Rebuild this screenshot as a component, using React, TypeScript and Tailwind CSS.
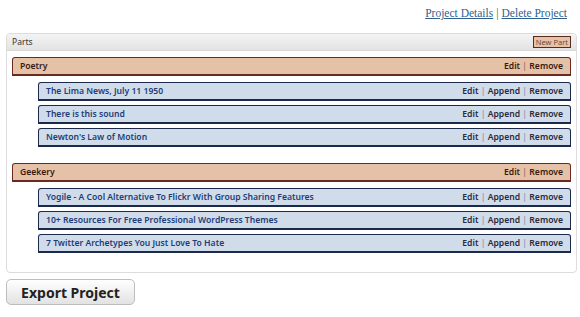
import React from 'react';

const groups = [
  {
    name: 'Poetry',
    items: ['The Lima News, July 11 1950', 'There is this sound', "Newton's Law of Motion"],
  },
  {
    name: 'Geekery',
    items: [
      'Yogile - A Cool Alternative To Flickr With Group Sharing Features',
      '10+ Resources For Free Professional WordPress Themes',
      '7 Twitter Archetypes You Just Love To Hate',
    ],
  },
];

const sans = { fontFamily: '"Noto Sans", "DejaVu Sans", sans-serif' };

const App: React.FC = () => {
  return (
    <div className="w-[580px] h-[317px] bg-white overflow-hidden" style={sans}>
      <div className="flex justify-end pr-[13px] pt-[5px] h-[33px] text-[11.5px] text-[#2e5f8f]" style={{ fontFamily: '"Liberation Serif", Georgia, serif' }}>
        <a className="underline">Project Details</a>
        <span className="px-[3px] text-[#555]">|</span>
        <a className="underline">Delete Project</a>
      </div>

      <div className="mx-[6px] w-[571px] border border-[#dcdcdc] rounded-[4px] pb-[19px]">
        <div className="flex items-center justify-between h-[17px] px-[5px] bg-gradient-to-b from-[#f3f3f3] to-[#e3e3e3] rounded-t-[4px] border-b border-[#d8d8d8]">
          <span className="text-[8.5px] text-[#333]">Parts</span>
          <span className="text-[7.5px] text-[#6b4b3b] bg-[#e6c3a8] border border-[#5a2a1a] px-[2px] leading-[10px]">New Part</span>
        </div>

        <div className="px-[5px] pt-[6px] flex flex-col">
          {groups.map((g, gi) => (
            <div key={g.name} className={gi > 0 ? 'mt-[16px]' : ''}>
              <div className="flex items-center justify-between h-[19px] px-[7px] bg-[#e5c2a7] border border-[#6b2a20] border-b-2 rounded-t-[3px] text-[8.6px] text-[#3a1a10] font-semibold">
                <span>{g.name}</span>
                <span>
                  Edit <span className="text-[#8a6050] font-normal">|</span> Remove
                </span>
              </div>
              <div className="pl-[26px] flex flex-col gap-[4px] mt-[6px]">
                {g.items.map((it) => (
                  <div key={it} className="flex items-center justify-between h-[19px] px-[7px] bg-[#d1dcea] border border-[#1b2a4a] border-b-2 rounded-t-[3px] text-[8.6px] font-semibold">
                    <span className="text-[#1d3c78]">{it}</span>
                    <span className="text-[#2a2a3a]">
                      Edit <span className="text-[#7a8aa0] font-normal">|</span> Append{' '}
                      <span className="text-[#7a8aa0] font-normal">|</span> Remove
                    </span>
                  </div>
                ))}
              </div>
            </div>
          ))}
        </div>
      </div>

      <button className="mt-[6px] ml-[6px] w-[129px] h-[26px] rounded-[5px] border border-[#bdbdbd] bg-gradient-to-b from-[#ffffff] to-[#e2e2e2] text-[14px] font-bold text-[#222]">
        Export Project
      </button>
    </div>
  );
};

export default App;
